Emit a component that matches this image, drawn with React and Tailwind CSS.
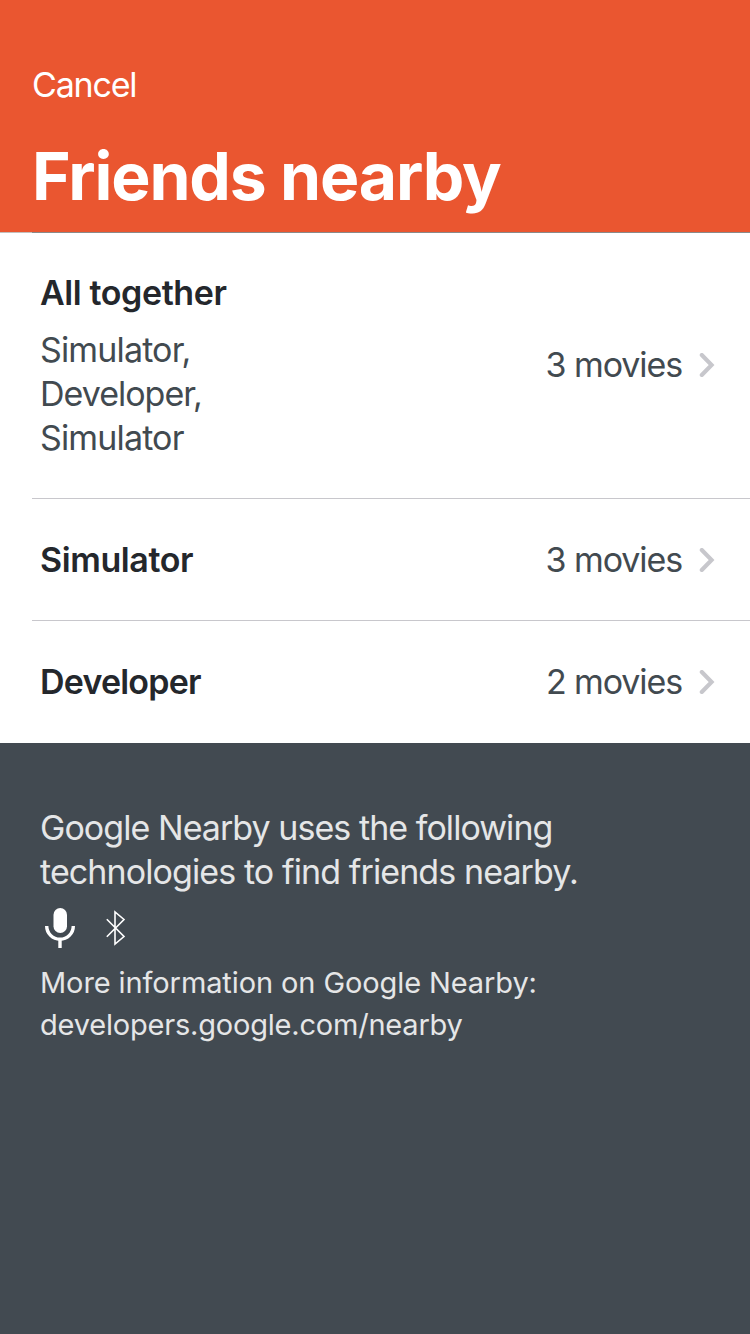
const people = [
  { name: "Simulator", movies: "3 movies", tracking: "tracking-[-0.4px]" },
  { name: "Developer", movies: "2 movies", tracking: "tracking-[-0.8px]" },
];

function Chevron() {
  return (
    <svg className="ml-[17px] mr-[35px] h-6 w-4 shrink-0" viewBox="0 0 16 24" fill="none" stroke="#c7c7cc" strokeWidth="4.1" strokeLinecap="round">
      <path d="M2.8 2L12.6 12L2.8 22" />
    </svg>
  );
}

function Movies({ children }) {
  return (
    <div className="flex items-center text-[#424a50]">
      <span className="tracking-[-1.1px]">{children}</span>
      <Chevron />
    </div>
  );
}

export default function App() {
  return (
    <div className="flex h-[1334px] w-[750px] flex-col bg-[#424a51] font-['Inter',sans-serif] text-[34px] leading-[44px]">
      <header className="flex h-[232px] flex-col bg-[#ea5630] pl-8 pt-[63px] text-white">
        <span className="tracking-[-1.2px]">Cancel</span>
        <h1 className="mt-[29px] whitespace-nowrap text-[66px] font-bold leading-[80px] tracking-[-1.15px]">Friends nearby</h1>
      </header>
      <div className="flex h-px bg-[#c3bfbd]">
        <div className="ml-8 grow bg-[#8a8a8a]" />
      </div>
      <main className="h-[510px] bg-white">
        <div className="ml-8 flex h-[266px] items-center justify-between border-b border-[#c8c7cc] pl-2">
          <div className="pb-px text-[#424a50]">
            <h2 className="mb-[13px] font-semibold tracking-[-0.4px] text-[#24272c]">All together</h2>
            <p className="tracking-[-0.85px]">Simulator,<br /><span className="tracking-[-1px]">Developer,</span><br />Simulator</p>
          </div>
          <div className="pb-px"><Movies>3 movies</Movies></div>
        </div>
        {people.map((p, i) => (
          <div key={p.name} className={i === 0 ? "ml-8 flex h-[122px] items-center justify-between border-b border-[#c8c7cc] pl-2" : "ml-8 flex h-[122px] items-center justify-between pl-2"}>
            <h2 className={`font-semibold text-[#24272c] ${p.tracking}`}>{p.name}</h2>
            <Movies>{p.movies}</Movies>
          </div>
        ))}
      </main>
      <footer className="pl-10 pt-[63px] text-[#e5e6e7]">
        <p className="tracking-[-0.95px]">Google Nearby uses the following<br /><span className="tracking-[-0.9px]">technologies to find friends nearby.</span></p>
        <div className="flex h-[68px] items-center">
          <svg className="h-[40px] w-10" viewBox="0 0 40 40" fill="white">
            <rect x="13.5" y="0" width="13.5" height="25" rx="6.75" />
            <path d="M6.7 18a13.3 13.3 0 0 0 26.6 0M20 31v9" fill="none" stroke="white" strokeWidth="3.4" />
          </svg>
          <svg className="ml-6 h-9 w-6" viewBox="0 0 24 36" fill="none" stroke="white" strokeWidth="1.6">
            <path d="M2.8 9.2L20 26.5L11 34V2L20 9.5L2.8 26.8" />
          </svg>
        </div>
        <p className="text-[29px] leading-[42px] tracking-[-0.1px]">More information on Google Nearby:<br /><span className="tracking-[-0.2px]">developers.google.com/nearby</span></p>
      </footer>
    </div>
  );
}
